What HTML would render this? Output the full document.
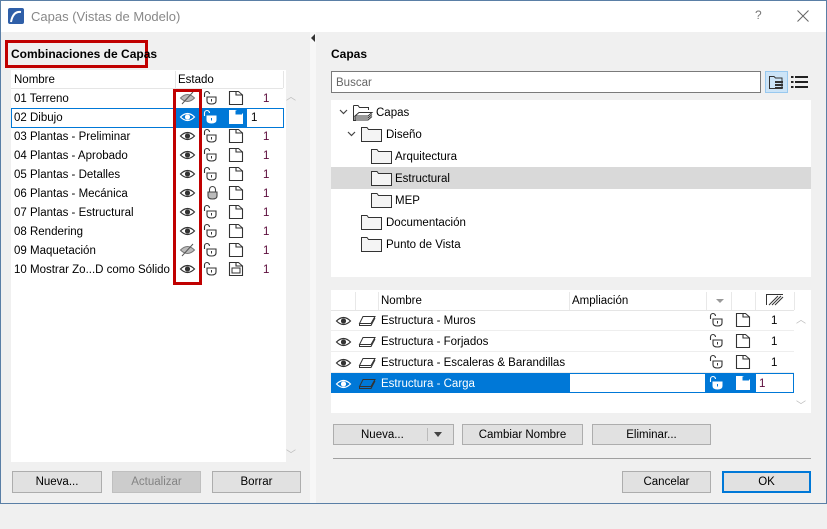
<!DOCTYPE html>
<html><head><meta charset="utf-8"><style>
*{box-sizing:border-box;margin:0;padding:0}
body{width:827px;height:504px;overflow:hidden;background:#f0f0f0;font-family:"Liberation Sans",sans-serif;font-size:11.5px;color:#000;position:relative}
.a{position:absolute}
.win{left:0;top:0;width:827px;height:504px;border:1px solid #5a7fa6}
.title{left:1px;top:1px;width:825px;height:31px;background:#fff}
.btn{position:absolute;background:#e1e1e1;border:1px solid #adadad;text-align:center;line-height:20px;font-size:11.5px}
.row{position:absolute;height:19px;line-height:21px;white-space:nowrap}
.num{color:#5a0a3a}
svg{position:absolute;overflow:visible}
</style></head><body>
<svg width="0" height="0" style="position:absolute">
<defs>
<g id="eye"><path d="M0.5 5 Q7.5 -2 14.5 5 Q7.5 12 0.5 5Z" fill="none" stroke="#333" stroke-width="1.2"/><circle cx="7.5" cy="5" r="2.6" fill="#333"/></g>
<g id="eyew"><path d="M0.5 5 Q7.5 -2 14.5 5 Q7.5 12 0.5 5Z" fill="none" stroke="#fff" stroke-width="1.2"/><circle cx="7.5" cy="5" r="2.6" fill="#fff"/></g>
<g id="eyeh"><path d="M0.5 5 Q7.5 -2 14.5 5 Q7.5 12 0.5 5Z" fill="#bbb" stroke="#777" stroke-width="1"/><line x1="2" y1="11" x2="13" y2="-1" stroke="#555" stroke-width="1"/></g>
<g id="lock"><path d="M1.5 6 V3 A2.5 2.5 0 0 1 6.5 3" fill="none" stroke="#333" stroke-width="1.1"/><path d="M4 6 H13 V10 Q13 13 8.5 13 Q4 13 4 10Z" fill="#fff" stroke="#333" stroke-width="1.1"/><line x1="8.5" y1="8" x2="8.5" y2="10.5" stroke="#333"/></g>
<g id="lockc"><path d="M4.5 6 V3.5 A3 3 0 0 1 10.5 3.5 V6" fill="none" stroke="#444" stroke-width="1.1"/><path d="M3 6 H12 V10 Q12 13 7.5 13 Q3 13 3 10Z" fill="#bbb" stroke="#444" stroke-width="1.1"/></g>
<g id="lockw"><path d="M1.5 6 V3 A2.5 2.5 0 0 1 6.5 3" fill="none" stroke="#fff" stroke-width="1.1"/><path d="M4 6 H13 V10 Q13 13 8.5 13 Q4 13 4 10Z" fill="#fff" stroke="#fff"/><line x1="8.5" y1="8" x2="8.5" y2="10.5" stroke="#0078d7"/></g>
<g id="page"><path d="M0.5 0.5 H7 V4 H13.5 V13.5 H0.5Z" fill="#fff" stroke="#333" stroke-width="1.1"/><path d="M7 0.5 L9.5 0.5 L13.5 4" fill="none" stroke="#333"/></g>
<g id="pagew"><path d="M0.5 0.5 H7 V4 H13.5 V13.5 H0.5Z" fill="#fff" stroke="#fff"/><path d="M7 0.5 V4 H13" fill="none" stroke="#0078d7"/></g>
<g id="fold"><path d="M0.5 2.5 H6 L7.5 4.5 H20.5 V16.5 H0.5Z" fill="#f4f4f4" stroke="#333" stroke-width="1"/></g>
<g id="lay"><path d="M4 0.5 H16 L12 7.5 H0.5Z" fill="none" stroke="#333"/><path d="M0.5 7.5 V9.5 H12 L16 2" fill="none" stroke="#333"/></g>
</defs></svg>

<div class="a win"></div>
<div class="a title"></div>
<svg style="left:8px;top:8px" width="16" height="16"><rect width="16" height="16" rx="2" fill="#2f5fa8"/><path d="M3 14 Q5 3 13 4" fill="none" stroke="#fff" stroke-width="2"/></svg>
<div class="a" style="left:31px;top:9px;font-size:13px;color:#888">Capas (Vistas de Modelo)</div>
<div class="a" style="left:755px;top:8px;font-size:12px;color:#777">?</div>
<svg style="left:797px;top:10px" width="12" height="12"><path d="M0.5 0.5 L11.5 11.5 M11.5 0.5 L0.5 11.5" stroke="#666" stroke-width="1"/></svg>

<!-- left panel -->
<div class="a" style="left:5px;top:40px;width:143px;height:28px;border:3px solid #c00000"></div>
<div class="a" style="left:11px;top:47px;font-weight:bold;font-size:12px">Combinaciones de Capas</div>
<div class="a" style="left:11px;top:70px;width:275px;height:392px;background:#fff"></div>
<div class="a" style="left:11px;top:70px;width:272px;height:19px;border-bottom:1px solid #e5e5e5"></div>
<div class="a" style="left:175px;top:71px;width:1px;height:17px;background:#e5e5e5"></div>
<div class="a" style="left:283px;top:71px;width:1px;height:17px;background:#e5e5e5"></div>
<div class="a" style="left:14px;top:74px">Nombre</div>
<div class="a" style="left:178px;top:74px">Estado</div>
<div class="a" style="left:286px;top:88px;color:#bbb;font-size:10px">︿</div>
<div class="a" style="left:286px;top:446px;color:#bbb;font-size:10px">﹀</div>
<div class="a" style="left:11px;top:108px;width:273px;height:20px;border:1px solid #0078d7"></div>
<div class="a" style="left:175px;top:109px;width:72px;height:18px;background:#0078d7"></div>

<div class="row" style="left:14px;top:89px">01 Terreno</div>
<div class="row" style="left:14px;top:108px">02 Dibujo</div>
<div class="row" style="left:14px;top:127px">03 Plantas - Preliminar</div>
<div class="row" style="left:14px;top:146px">04 Plantas - Aprobado</div>
<div class="row" style="left:14px;top:165px">05 Plantas - Detalles</div>
<div class="row" style="left:14px;top:184px">06 Plantas - Mecánica</div>
<div class="row" style="left:14px;top:203px">07 Plantas - Estructural</div>
<div class="row" style="left:14px;top:222px">08 Rendering</div>
<div class="row" style="left:14px;top:241px">09 Maquetación</div>
<div class="row" style="left:14px;top:260px">10 Mostrar Zo...D como Sólido</div>

<svg style="left:180px;top:93px"><use href="#eyeh"/></svg>
<svg style="left:180px;top:112px"><use href="#eyew"/></svg>
<svg style="left:180px;top:131px"><use href="#eye"/></svg>
<svg style="left:180px;top:150px"><use href="#eye"/></svg>
<svg style="left:180px;top:169px"><use href="#eye"/></svg>
<svg style="left:180px;top:188px"><use href="#eye"/></svg>
<svg style="left:180px;top:207px"><use href="#eye"/></svg>
<svg style="left:180px;top:226px"><use href="#eye"/></svg>
<svg style="left:180px;top:245px"><use href="#eyeh"/></svg>
<svg style="left:180px;top:264px"><use href="#eye"/></svg>

<svg style="left:203px;top:91px"><use href="#lock"/></svg>
<svg style="left:203px;top:110px"><use href="#lockw"/></svg>
<svg style="left:203px;top:129px"><use href="#lock"/></svg>
<svg style="left:203px;top:148px"><use href="#lock"/></svg>
<svg style="left:203px;top:167px"><use href="#lock"/></svg>
<svg style="left:205px;top:186px"><use href="#lockc"/></svg>
<svg style="left:203px;top:205px"><use href="#lock"/></svg>
<svg style="left:203px;top:224px"><use href="#lock"/></svg>
<svg style="left:203px;top:243px"><use href="#lock"/></svg>
<svg style="left:203px;top:262px"><use href="#lock"/></svg>

<svg style="left:229px;top:91px"><use href="#page"/></svg>
<svg style="left:229px;top:110px"><use href="#pagew"/></svg>
<svg style="left:229px;top:129px"><use href="#page"/></svg>
<svg style="left:229px;top:148px"><use href="#page"/></svg>
<svg style="left:229px;top:167px"><use href="#page"/></svg>
<svg style="left:229px;top:186px"><use href="#page"/></svg>
<svg style="left:229px;top:205px"><use href="#page"/></svg>
<svg style="left:229px;top:224px"><use href="#page"/></svg>
<svg style="left:229px;top:243px"><use href="#page"/></svg>
<svg style="left:229px;top:262px"><use href="#page"/><rect x="3" y="6" width="8" height="5" fill="none" stroke="#333"/></svg>

<div class="a" style="left:248px;top:109px;width:35px;height:18px;background:#fff"></div>
<div class="row num" style="left:263px;top:89px">1</div>
<div class="row" style="left:251px;top:108px">1</div>
<div class="row num" style="left:263px;top:127px">1</div>
<div class="row num" style="left:263px;top:146px">1</div>
<div class="row num" style="left:263px;top:165px">1</div>
<div class="row num" style="left:263px;top:184px">1</div>
<div class="row num" style="left:263px;top:203px">1</div>
<div class="row num" style="left:263px;top:222px">1</div>
<div class="row num" style="left:263px;top:241px">1</div>
<div class="row num" style="left:263px;top:260px">1</div>

<div class="a" style="left:173px;top:89px;width:29px;height:196px;border:3px solid #c00000"></div>

<div class="btn" style="left:12px;top:471px;width:90px;height:22px">Nueva...</div>
<div class="btn" style="left:112px;top:471px;width:89px;height:22px;background:#ccc;border-color:#bfbfbf;color:#838383">Actualizar</div>
<div class="btn" style="left:212px;top:471px;width:89px;height:22px">Borrar</div>

<!-- divider -->
<div class="a" style="left:310px;top:32px;width:6px;height:471px;background:#f7f7f7"></div>
<div class="a" style="left:311px;top:34px;width:0;height:0;border-top:4px solid transparent;border-bottom:4px solid transparent;border-right:4px solid #333"></div>

<!-- right panel -->
<div class="a" style="left:331px;top:47px;font-weight:bold;font-size:12px">Capas</div>
<div class="a" style="left:331px;top:71px;width:430px;height:22px;background:#fff;border:1px solid #7a7a7a;padding:5px 4px;color:#666">Buscar</div>
<div class="a" style="left:765px;top:71px;width:23px;height:22px;background:#cce4f7;border:1px solid #99c9ef"></div>
<svg style="left:769px;top:75px" width="16" height="14"><path d="M0.5 1.5 H5 L6.5 3 H13 V13.5 H0.5Z" fill="none" stroke="#333"/><rect x="6" y="6" width="8" height="2" fill="#333"/><rect x="6" y="9" width="8" height="2" fill="#333"/><rect x="6" y="12" width="8" height="1.5" fill="#333"/></svg>
<svg style="left:791px;top:76px" width="18" height="12"><rect x="0" y="0" width="2.5" height="2" fill="#222"/><rect x="4" y="0" width="13" height="2" fill="#222"/><rect x="0" y="5" width="2.5" height="2" fill="#222"/><rect x="4" y="5" width="13" height="2" fill="#222"/><rect x="0" y="10" width="2.5" height="2" fill="#222"/><rect x="4" y="10" width="13" height="2" fill="#222"/></svg>

<div class="a" style="left:331px;top:100px;width:480px;height:177px;background:#fff"></div>
<div class="a" style="left:331px;top:167px;width:480px;height:22px;background:#d9d9d9"></div>
<svg style="left:339px;top:109px" width="10" height="6"><path d="M1 1 L4.5 4.5 L8 1" fill="none" stroke="#444" stroke-width="1.2"/></svg>
<svg style="left:353px;top:104px" width="20" height="18"><path d="M0.5 1.5 H5 L6.5 3.5 H15.5 V6" fill="none" stroke="#333"/><path d="M0.5 1.5 V16.5 H3" fill="none" stroke="#333"/><path d="M6 8.5 H19 L15 12 H2Z" fill="#fff" stroke="#333"/><path d="M2 12 V14 H15 L19 10.5" fill="none" stroke="#333"/><path d="M2 14 V16 H15 L19 12.5" fill="none" stroke="#333"/></svg>
<div class="row" style="left:376px;top:103px">Capas</div>
<svg style="left:347px;top:131px" width="10" height="6"><path d="M1 1 L4.5 4.5 L8 1" fill="none" stroke="#444" stroke-width="1.2"/></svg>
<svg style="left:361px;top:125px" width="22" height="18"><use href="#fold"/></svg>
<div class="row" style="left:386px;top:125px">Diseño</div>
<svg style="left:371px;top:147px" width="22" height="18"><use href="#fold"/></svg>
<div class="row" style="left:395px;top:147px">Arquitectura</div>
<svg style="left:371px;top:169px" width="22" height="18"><use href="#fold"/></svg>
<div class="row" style="left:395px;top:169px">Estructural</div>
<svg style="left:371px;top:191px" width="22" height="18"><use href="#fold"/></svg>
<div class="row" style="left:395px;top:191px">MEP</div>
<svg style="left:361px;top:213px" width="22" height="18"><use href="#fold"/></svg>
<div class="row" style="left:386px;top:213px">Documentación</div>
<svg style="left:361px;top:235px" width="22" height="18"><use href="#fold"/></svg>
<div class="row" style="left:386px;top:235px">Punto de Vista</div>

<!-- bottom table -->
<div class="a" style="left:331px;top:290px;width:480px;height:123px;background:#fff"></div>
<div class="a" style="left:331px;top:292px;width:463px;height:19px;border-bottom:1px solid #e5e5e5"></div>
<div class="a" style="left:355px;top:292px;width:1px;height:18px;background:#e8e8e8"></div>
<div class="a" style="left:378px;top:292px;width:1px;height:18px;background:#e8e8e8"></div>
<div class="a" style="left:569px;top:292px;width:1px;height:18px;background:#e8e8e8"></div>
<div class="a" style="left:706px;top:292px;width:1px;height:18px;background:#e8e8e8"></div>
<div class="a" style="left:731px;top:292px;width:1px;height:18px;background:#e8e8e8"></div>
<div class="a" style="left:755px;top:292px;width:1px;height:18px;background:#e8e8e8"></div>
<div class="a" style="left:794px;top:292px;width:1px;height:18px;background:#e8e8e8"></div>
<div class="a" style="left:381px;top:295px">Nombre</div>
<div class="a" style="left:572px;top:295px">Ampliación</div>
<div class="a" style="left:716px;top:299px;width:0;height:0;border-left:4px solid transparent;border-right:4px solid transparent;border-top:4px solid #999"></div>
<svg style="left:766px;top:294px" width="18" height="12"><path d="M0.5 11 V0.5 H17" fill="none" stroke="#333"/><path d="M3 11 L12 2 M6 11 L15 2 M9 11 L17 3" stroke="#333"/></svg>
<div class="a" style="left:331px;top:330px;width:463px;height:1px;background:#eee"></div>
<div class="a" style="left:331px;top:351px;width:463px;height:1px;background:#eee"></div>
<div class="a" style="left:331px;top:372px;width:463px;height:1px;background:#eee"></div>
<div class="a" style="left:331px;top:373px;width:463px;height:20px;background:#0078d7"></div>
<div class="a" style="left:570px;top:374px;width:135px;height:18px;background:#fff"></div>
<div class="a" style="left:756px;top:374px;width:37px;height:18px;background:#fff"></div>
<div class="a" style="left:796px;top:311px;color:#bbb;font-size:10px">︿</div>
<div class="a" style="left:796px;top:397px;color:#bbb;font-size:10px">﹀</div>

<svg style="left:336px;top:316px"><use href="#eye"/></svg>
<svg style="left:336px;top:337px"><use href="#eye"/></svg>
<svg style="left:336px;top:358px"><use href="#eye"/></svg>
<svg style="left:336px;top:379px"><use href="#eyew"/></svg>
<svg style="left:359px;top:316px"><use href="#lay"/></svg>
<svg style="left:359px;top:337px"><use href="#lay"/></svg>
<svg style="left:359px;top:358px"><use href="#lay"/></svg>
<svg style="left:359px;top:379px"><use href="#lay"/></svg>
<div class="row" style="left:381px;top:311px">Estructura - Muros</div>
<div class="row" style="left:381px;top:332px">Estructura - Forjados</div>
<div class="row" style="left:381px;top:353px">Estructura - Escaleras &amp; Barandillas</div>
<div class="row" style="left:381px;top:374px;color:#fff">Estructura - Carga</div>
<svg style="left:709px;top:313px"><use href="#lock"/></svg>
<svg style="left:709px;top:334px"><use href="#lock"/></svg>
<svg style="left:709px;top:355px"><use href="#lock"/></svg>
<svg style="left:709px;top:376px"><use href="#lockw"/></svg>
<svg style="left:736px;top:313px"><use href="#page"/></svg>
<svg style="left:736px;top:334px"><use href="#page"/></svg>
<svg style="left:736px;top:355px"><use href="#page"/></svg>
<svg style="left:736px;top:376px"><use href="#pagew"/></svg>
<div class="row" style="left:771px;top:311px">1</div>
<div class="row" style="left:771px;top:332px">1</div>
<div class="row" style="left:771px;top:353px">1</div>
<div class="row num" style="left:759px;top:374px">1</div>

<div class="btn" style="left:333px;top:424px;width:121px;height:21px;text-align:left;padding-left:27px">Nueva...</div>
<div class="a" style="left:427px;top:428px;width:1px;height:13px;background:#bbb"></div>
<div class="a" style="left:434px;top:432px;width:0;height:0;border-left:4px solid transparent;border-right:4px solid transparent;border-top:5px solid #444"></div>
<div class="btn" style="left:462px;top:424px;width:121px;height:21px">Cambiar Nombre</div>
<div class="btn" style="left:592px;top:424px;width:119px;height:21px">Eliminar...</div>
<div class="a" style="left:333px;top:458px;width:478px;height:1px;background:#a0a0a0"></div>
<div class="btn" style="left:622px;top:471px;width:89px;height:22px">Cancelar</div>
<div class="btn" style="left:722px;top:471px;width:89px;height:22px;border:2px solid #0078d7;line-height:18px">OK</div>
</body></html>
